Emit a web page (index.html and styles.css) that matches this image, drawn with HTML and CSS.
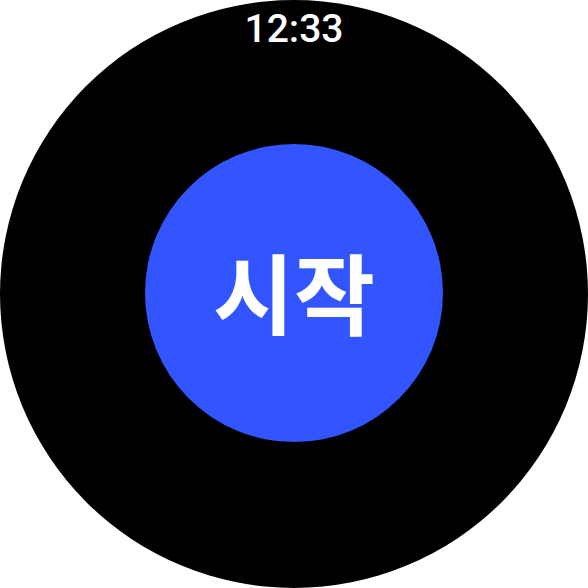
FILE: index.html
```html
<!DOCTYPE html>
<html lang="ko">

<head>
	<meta charset="UTF-8">
	<title>시작</title>
	<link rel="stylesheet" href="styles.css">
</head>

<body>
	<div class="watch">
		<div class="clock">12:33</div>
		<button class="start" type="button">시작</button>
	</div>
</body>

</html>
```

FILE: styles.css
```css
html,
body {
	margin: 0;
	background: #fff;
}

.watch {
	width: 588px;
	height: 588px;
	border-radius: 50%;
	background: #000;
	display: flex;
	flex-direction: column;
	align-items: center;
	padding-top: 10px;
	box-sizing: border-box;
}

.clock {
	color: #fff;
	font-family: Roboto, "Noto Sans", sans-serif;
	font-weight: 500;
	font-size: 39px;
	line-height: 1;
}

.start {
	margin-top: 95px;
	width: 298px;
	height: 298px;
	border: 0;
	border-radius: 50%;
	padding: 0 0 6px;
	background: #3355ff;
	color: #fff;
	font-family: "Noto Sans CJK KR", "Noto Sans", sans-serif;
	font-weight: 700;
	font-size: 88px;
	line-height: 1;
	cursor: pointer;
}
```
